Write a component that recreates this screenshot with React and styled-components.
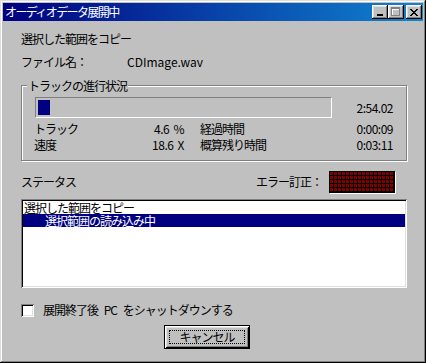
import React from 'react'
import styled, { createGlobalStyle } from 'styled-components'

const GlobalStyle = createGlobalStyle`
  html, body {
    margin: 0;
    padding: 0;
    background: #c0c0c0;
  }
  * {
    box-sizing: border-box;
  }
`

const font = `"MS UI Gothic", "Noto Sans CJK JP", "Liberation Sans", sans-serif`

const Window = styled.div`
  width: 426px;
  height: 363px;
  padding: 3px;
  display: flex;
  flex-direction: column;
  background: #c0c0c0;
  font-family: ${font};
  font-size: 12px;
  color: #000;
  box-shadow: inset -1px -1px #000, inset 1px 1px #dfdfdf,
    inset -2px -2px #808080, inset 2px 2px #fff;
`

const TitleBar = styled.div`
  height: 18px;
  display: flex;
  align-items: center;
  padding: 0 1px 0 2px;
  background: linear-gradient(to right, #000080, #1084d0);
  color: #fff;
`

const TitleText = styled.span`
  line-height: 14px;
  letter-spacing: -1.6px;
`

const TitleButtons = styled.div`
  margin-left: auto;
  display: flex;
`

const TitleButton = styled.button`
  width: 16px;
  height: 14px;
  padding: 0;
  margin-left: ${p => (p.$gap ? '2px' : '0')};
  border: none;
  background: #c0c0c0;
  display: flex;
  align-items: center;
  justify-content: center;
  box-shadow: inset -1px -1px #000, inset 1px 1px #fff,
    inset -2px -2px #808080, inset 2px 2px #dfdfdf;
`

const Body = styled.div`
  flex: 1;
  display: flex;
  flex-direction: column;
  padding: 11px 16px 0 18px;
`

const Line = styled.div`
  display: flex;
  line-height: 14px;
  letter-spacing: -1px;
  margin-top: ${p => p.$mt || 0}px;
`

const FileName = styled.span`
  margin-left: ${p => p.$ml}px;
  letter-spacing: 0;
`

const Group = styled.div`
  position: relative;
  margin-top: 16px;
  height: 76px;
  border: 1px solid #808080;
  box-shadow: inset 1px 1px #fff, 1px 1px #fff;
  padding: 11px 13px 0 12px;
`

const Legend = styled.span`
  position: absolute;
  top: -7px;
  left: 5px;
  padding: 0 1px;
  background: #c0c0c0;
  line-height: 14px;
  letter-spacing: -1px;
`

const ProgressRow = styled.div`
  display: flex;
  align-items: center;
  margin-left: 1px;
`

const ProgressTrack = styled.div`
  width: 297px;
  height: 21px;
  padding: 2px;
  border: 1px solid;
  border-color: #808080 #fff #fff #808080;
`

const ProgressFill = styled.div`
  height: 100%;
  background: #000080;
`

const Value = styled.span`
  margin-left: auto;
  text-align: right;
  line-height: 14px;
  letter-spacing: -0.5px;
`

const Stats = styled.div`
  display: grid;
  grid-template-columns: 90px 60px 16px 1fr auto;
  grid-auto-rows: 16px;
  margin-top: 3px;
  line-height: 16px;
`

const StatLabel = styled.span`
  letter-spacing: -1px;
  grid-column: ${p => p.$col};
`

const StatValue = styled.span`
  text-align: right;
  letter-spacing: -0.5px;
  word-spacing: 2px;
  grid-column: ${p => p.$col};
`

const StatusRow = styled.div`
  display: flex;
  align-items: center;
  margin-top: 10px;
  margin-right: 12px;
`

const StatusText = styled.span`
  line-height: 14px;
  letter-spacing: -1px;
`

const ErrorBox = styled.div`
  margin-left: auto;
  display: flex;
  align-items: center;
  gap: 7px;
`

const Led = styled.div`
  width: 66px;
  height: 22px;
  background-color: #800000;
  background-image: linear-gradient(to right, #000 1px, transparent 1px),
    linear-gradient(to bottom, #000 1px, transparent 1px);
  background-size: 4px 4px;
  box-shadow: inset -1px -1px #000, 1px 1px #fff;
`

const ListBox = styled.div`
  margin-top: 6px;
  height: 89px;
  background: #fff;
  padding: 2px;
  box-shadow: inset 1px 1px #808080, inset -1px -1px #fff,
    inset 2px 2px #000, inset -2px -2px #dfdfdf;
`

const ListItem = styled.div`
  height: 13px;
  line-height: 13px;
  letter-spacing: -1px;
  padding-left: ${p => (p.$selected ? 22 : 1)}px;
  background: ${p => (p.$selected ? '#000080' : 'transparent')};
  color: ${p => (p.$selected ? '#fff' : '#000')};
`

const CheckRow = styled.label`
  display: flex;
  align-items: center;
  gap: 9px;
  margin-top: 15px;
  line-height: 14px;
  letter-spacing: -1px;
  word-spacing: 4px;
`

const CheckBox = styled.span`
  width: 13px;
  height: 13px;
  background: #fff;
  box-shadow: inset 1px 1px #808080, inset -1px -1px #fff,
    inset 2px 2px #000, inset -2px -2px #dfdfdf;
`

const Button = styled.button`
  align-self: flex-start;
  margin: 8px 0 0 143px;
  width: 86px;
  height: 24px;
  padding: 4px;
  border: 1px solid #000;
  background: #c0c0c0;
  font-family: ${font};
  font-size: 12px;
  color: #000;
  box-shadow: inset 1px 1px #fff, inset -1px -1px #000,
    inset 2px 2px #dfdfdf, inset -2px -2px #808080;
`

const FocusRect = styled.span`
  display: flex;
  align-items: center;
  justify-content: center;
  height: 100%;
  border: 1px dotted #000;
  line-height: 12px;
  letter-spacing: -1px;
`

const MinIcon = () => (
  <svg width="8" height="7" viewBox="0 0 8 7" shapeRendering="crispEdges">
    <rect x="1" y="5" width="6" height="2" fill="#000" />
  </svg>
)

const MaxIcon = () => (
  <svg width="10" height="10" viewBox="0 0 10 10" shapeRendering="crispEdges">
    <path d="M1 1h8v8H1z M2 3v5h6V3z" fill="#fff" fillRule="evenodd" />
    <path d="M0 0h9v9H0z M1 2v6h7V2z" fill="#808080" fillRule="evenodd" />
  </svg>
)

const CloseIcon = () => (
  <svg width="8" height="7" viewBox="0 0 8 7" shapeRendering="crispEdges" fill="#000">
    <path d="M0 0h2v1h1v1h2V1h1V0h2v1H7v1H6v1H5v1h1v1h1v1h1v1H6V6H5V5H3v1H2v1H0V6h1V5h1V4h1V3H2V2H1V1H0z" />
  </svg>
)

const App = () => {
  return (
    <>
      <GlobalStyle />
      <Window>
        <TitleBar>
          <TitleText>オーディオデータ展開中</TitleText>
          <TitleButtons>
            <TitleButton><MinIcon /></TitleButton>
            <TitleButton><MaxIcon /></TitleButton>
            <TitleButton $gap><CloseIcon /></TitleButton>
          </TitleButtons>
        </TitleBar>
        <Body>
          <Line>選択した範囲をコピー</Line>
          <Line $mt={9}>
            ファイル名：<FileName $ml={40}>CDImage.wav</FileName>
          </Line>
          <Group>
            <Legend>トラックの進行状況</Legend>
            <ProgressRow>
              <ProgressTrack>
                <ProgressFill style={{ width: '12px' }} />
              </ProgressTrack>
              <Value>2:54.02</Value>
            </ProgressRow>
            <Stats>
              <StatLabel $col={1}>トラック</StatLabel>
              <StatValue $col={2}>4.6 %</StatValue>
              <StatLabel $col={4}>経過時間</StatLabel>
              <StatValue $col={5}>0:00:09</StatValue>
              <StatLabel $col={1}>速度</StatLabel>
              <StatValue $col={2}>18.6 X</StatValue>
              <StatLabel $col={4}>概算残り時間</StatLabel>
              <StatValue $col={5}>0:03:11</StatValue>
            </Stats>
          </Group>
          <StatusRow>
            <StatusText>ステータス</StatusText>
            <ErrorBox>
              <StatusText>エラー訂正：</StatusText>
              <Led />
            </ErrorBox>
          </StatusRow>
          <ListBox>
            <ListItem>選択した範囲をコピー</ListItem>
            <ListItem $selected>選択範囲の読み込み中</ListItem>
          </ListBox>
          <CheckRow>
            <CheckBox />
            展開終了後 PC をシャットダウンする
          </CheckRow>
          <Button>
            <FocusRect>キャンセル</FocusRect>
          </Button>
        </Body>
      </Window>
    </>
  )
}

export default App
